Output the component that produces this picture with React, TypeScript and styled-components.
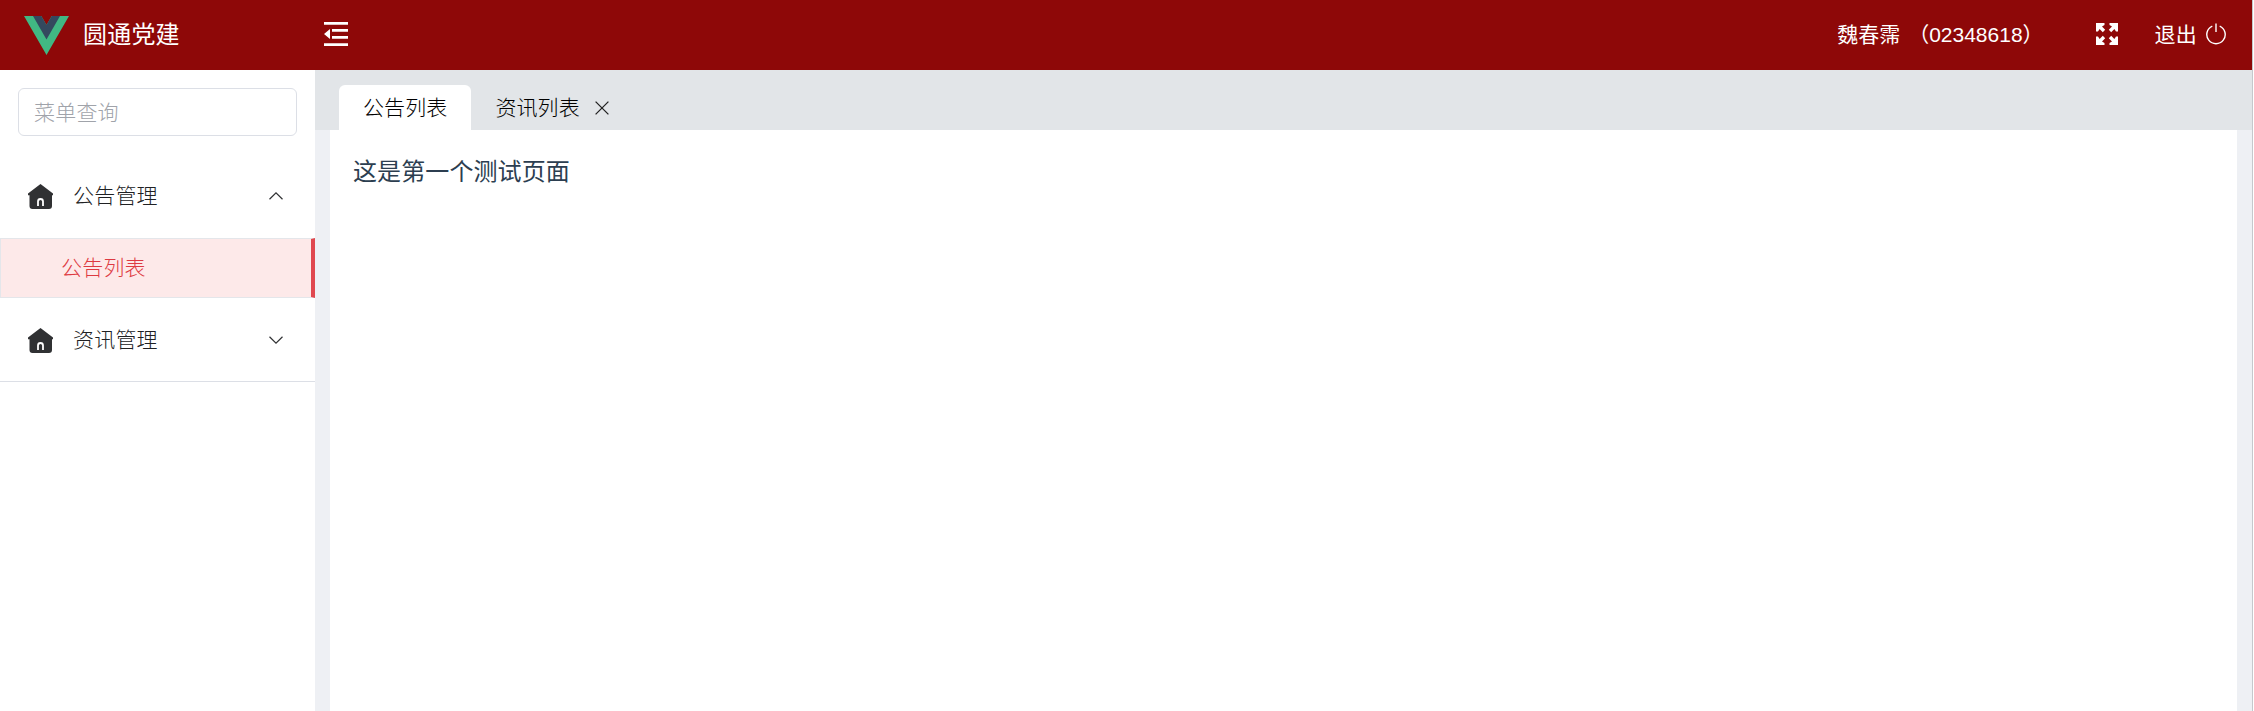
import React from "react";
import styled, { createGlobalStyle } from "styled-components";

const Global = createGlobalStyle`
  * { box-sizing: border-box; }
  html, body, #root { height: 100%; }
  body {
    margin: 0;
    overflow: hidden;
    background: #fff;
    color: #2c3e50;
    font-family: "Liberation Sans", "Noto Sans CJK SC", sans-serif;
    font-size: 21px;
  }
`;

const Page = styled.div`
  width: 2253px;
  height: 711px;
  display: flex;
  flex-direction: column;
  border-right: 1px solid #c5c8cc;
`;

const Header = styled.header`
  height: 70px;
  flex: none;
  display: flex;
  align-items: center;
  padding: 0 26px 2px 24px;
  background: #8e0808;
  color: #fff;
  svg { display: block; flex: none; }
`;

const Brand = styled.div`
  display: flex;
  align-items: center;
  width: 300px;
  gap: 14px;
  font-size: 24px;
  line-height: 36px;
  letter-spacing: 0.2px;
  svg { margin-top: 3px; }
  span { padding-top: 1px; }
`;

const Spacer = styled.div`
  flex: 1;
`;

const User = styled.span`
  margin-right: 52px;
  padding-top: 2px;
  white-space: pre;
  word-spacing: 2px;
  line-height: 30px;
`;

const Logout = styled.div`
  display: flex;
  align-items: center;
  gap: 9px;
  margin-left: 37px;
  line-height: 30px;
  letter-spacing: 0.2px;
  span { padding-top: 2px; }
`;

const Body = styled.div`
  flex: 1;
  display: flex;
  min-height: 0;
`;

const Sidebar = styled.aside`
  width: 315px;
  flex: none;
  background: #fff;
  letter-spacing: 0.2px;
`;

const Search = styled.input`
  display: block;
  width: 279px;
  height: 48px;
  margin: 18px 18px;
  padding: 1px 15px 0;
  border: 1px solid #dcdfe6;
  border-radius: 6px;
  outline: none;
  font: inherit;
  font-weight: 300;
  letter-spacing: inherit;
  &::placeholder { color: #a0a3aa; opacity: 1; }
`;

const Menu = styled.nav`
  height: 228px;
  border-bottom: 1px solid #dcdfe6;
`;

const Group = styled.div`
  height: 84px;
  display: flex;
  align-items: center;
  padding: 0 32px 0 28px;
  color: #202123;
  font-weight: 300;
  span { flex: 1; margin-left: 20px; padding-bottom: 4px; }
`;

const Item = styled.div`
  height: 60px;
  display: flex;
  align-items: center;
  padding: 0 0 4px 60px;
  border: 1px solid #e4e6ea;
  border-right: 4px solid #e0484f;
  background: #fde9e9;
  color: #dd3a42;
  font-weight: 300;
`;

const Main = styled.main`
  flex: 1;
  display: flex;
  flex-direction: column;
  background: #eef0f4;
`;

const TabBar = styled.div`
  height: 60px;
  flex: none;
  display: flex;
  align-items: flex-end;
  padding-left: 24px;
  background: #e2e5e8;
`;

const Tab = styled.div<{ $active?: boolean }>`
  height: 45px;
  display: flex;
  align-items: center;
  gap: 15px;
  padding: 0 24px;
  border-radius: 6px 6px 0 0;
  background: ${(p) => (p.$active ? "#fff" : "transparent")};
  color: #000;
  font-weight: 300;
  letter-spacing: 0.1px;
  span { padding-bottom: 3px; }
`;

const Content = styled.section`
  flex: 1;
  margin: 0 15px;
  padding: 24px 23px;
  background: #fff;
  font-size: 24px;
  line-height: 36px;
  letter-spacing: 0.1px;
`;

const Logo = () => (
  <svg width="45" height="39" viewBox="0 0 261.76 226.69">
    <path fill="#41b883" d="M161.1 0l-30.22 52.35L100.66 0H0l130.88 226.69L261.76 0z" />
    <path fill="#34495e" d="M161.1 0l-30.22 52.35L100.66 0H52.35l78.53 136.01L209.4 0z" />
  </svg>
);

const Fold = () => (
  <svg width="24" height="24" viewBox="0 0 24 24" fill="#fff">
    <path d="M0 0h24v2.700H0zM8 7h16v2.700H8zM8 14h16v2.700H8zM0 21.300h24V24H0zM6 7v10L0 12z" />
  </svg>
);

const FullScreen = () => (
  <svg width="22" height="22" viewBox="0 0 22 22" fill="#fff">
    {[0, 90, 180, 270].map((a) => (
      <path
        key={a}
        transform={`rotate(${a} 11 11)`}
        d="M0 0H8.500V2L6 3.600L9.200 6.800L6.800 9.200L3.600 6L2 8.500H0Z"
      />
    ))}
  </svg>
);

const Power = () => (
  <svg width="20" height="22" viewBox="0 0 20 22" fill="none" stroke="#fff" strokeWidth="1.4">
    <path d="M10 0.5V9M6.300 3.100A9.200 9.200 0 1 0 13.700 3.100" />
  </svg>
);

const House = () => (
  <svg width="25" height="25" viewBox="0 0 25 25">
    <path fill="#303133" d="M12.500 0L25 9.600V11.200H24V22a3 3 0 0 1-3 3H4.500a3 3 0 0 1-3-3V11.200H0V9.600Z" />
    <path fill="none" stroke="#fff" strokeWidth="1.8" d="M10 22V17.500a2.500 2.500 0 0 1 5 0V22" />
  </svg>
);

const Chevron = ({ up }: { up?: boolean }) => (
  <svg width="14" height="8" viewBox="0 0 14 8" fill="none" stroke="#303133" strokeWidth="1.2">
    <path d={up ? "M.5 7.300L7 .9L13.500 7.300" : "M.5 .7L7 7.100L13.500 .7"} />
  </svg>
);

const Close = () => (
  <svg width="14" height="14" viewBox="0 0 14 14" fill="none" stroke="#222" strokeWidth="1.3">
    <path d="M.6 .6L13.400 13.400M13.400 .6L.6 13.400" />
  </svg>
);

export default function App() {
  return (
    <Page>
      <Global />
      <Header>
        <Brand>
          <Logo />
          <span>圆通党建</span>
        </Brand>
        <Fold />
        <Spacer />
        <User>魏春霈 （02348618）</User>
        <FullScreen />
        <Logout>
          <span>退出</span>
          <Power />
        </Logout>
      </Header>
      <Body>
        <Sidebar>
          <Search placeholder="菜单查询" />
          <Menu>
            <Group>
              <House />
              <span>公告管理</span>
              <Chevron up />
            </Group>
            <Item>公告列表</Item>
            <Group>
              <House />
              <span>资讯管理</span>
              <Chevron />
            </Group>
          </Menu>
        </Sidebar>
        <Main>
          <TabBar>
            <Tab $active>
              <span>公告列表</span>
            </Tab>
            <Tab>
              <span>资讯列表</span>
              <Close />
            </Tab>
          </TabBar>
          <Content>这是第一个测试页面</Content>
        </Main>
      </Body>
    </Page>
  );
}
